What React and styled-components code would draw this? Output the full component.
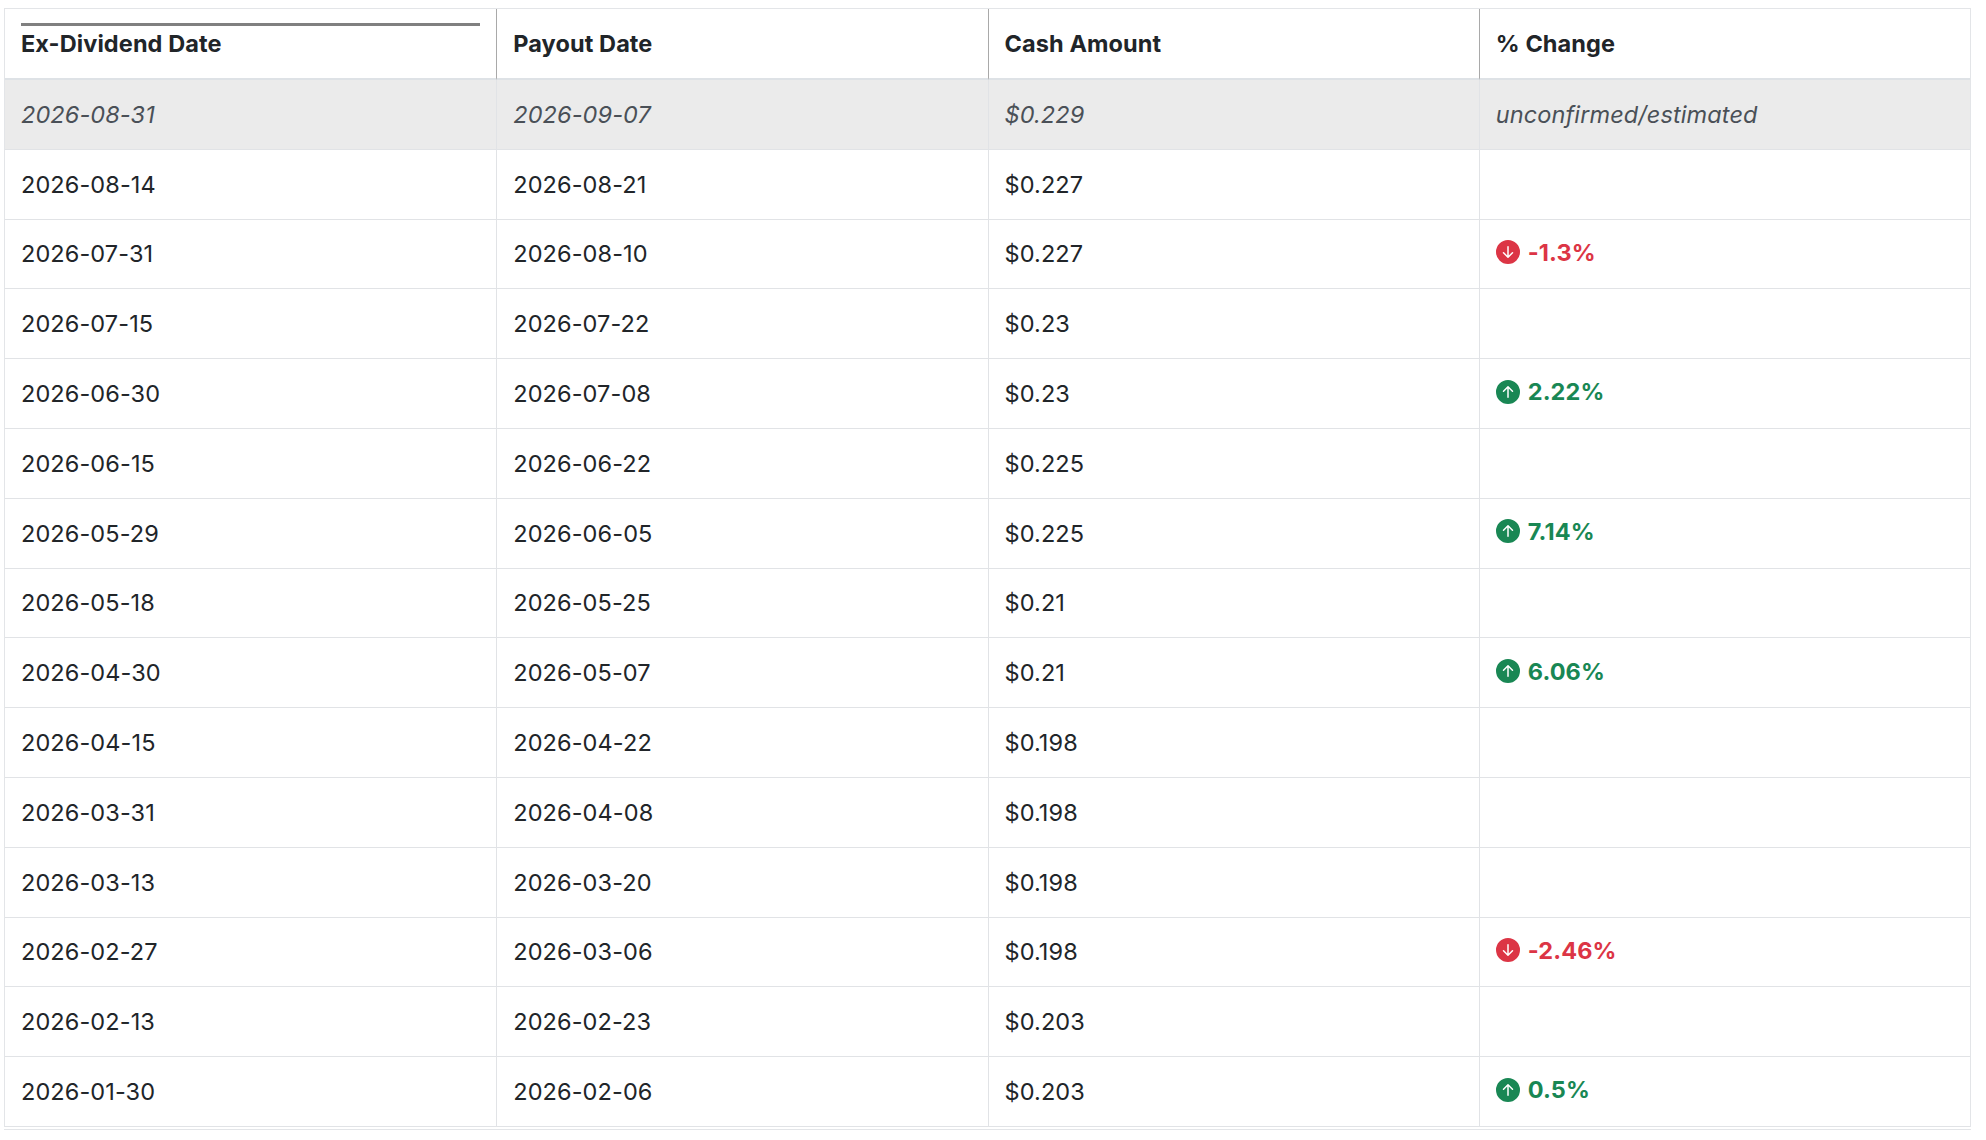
import React from "react";
import styled, { createGlobalStyle } from "styled-components";
import { BsArrowDownCircleFill, BsArrowUpCircleFill } from "react-icons/bs";

const GlobalStyle = createGlobalStyle`
  html, body {
    margin: 0;
    padding: 0;
    background: #ffffff;
  }
  body {
    font-family: Inter, "Noto Sans", "Liberation Sans", sans-serif;
    color: #212529;
  }
`;

const Page = styled.div`
  padding: 8px 15px 0 4px;
`;

const Frame = styled.div`
  border-bottom: 1px solid #e3e5e8;
  padding-bottom: 2px;
`;

const Table = styled.table`
  width: 100%;
  table-layout: fixed;
  border-collapse: separate;
  border-spacing: 0;
  border-top: 1px solid #e3e5e8;
  border-left: 1px solid #e3e5e8;
  border-right: 1px solid #e3e5e8;
  font-size: 23.5px;
  letter-spacing: 0.1px;
`;

const HeadCell = styled.th`
  position: relative;
  height: 69px;
  padding: 0 16px;
  text-align: left;
  vertical-align: middle;
  font-weight: 700;
  color: #212529;
  border-bottom: 2px solid #dee2e6;
  border-left: ${(p) => (p.$first ? "none" : "1px solid #a9a9a9")};

  ${(p) =>
    p.$sorted &&
    `
    &::before {
      content: "";
      position: absolute;
      left: 16px;
      right: 16px;
      top: 14px;
      height: 3px;
      background: #808080;
    }
  `}
`;

const Row = styled.tr`
  background: ${(p) => (p.$estimated ? "#ebebeb" : "#ffffff")};
  font-style: ${(p) => (p.$estimated ? "italic" : "normal")};
  color: ${(p) => (p.$estimated ? "#4a5057" : "#212529")};
`;

const Cell = styled.td`
  height: 68.8px;
  padding: 0 16px;
  vertical-align: middle;
  border-bottom: 1px solid #e1e3e6;
  border-left: ${(p) => (p.$first ? "none" : "1px solid #e1e3e6")};
  white-space: nowrap;
`;

const Change = styled.span`
  display: inline-flex;
  align-items: center;
  gap: 8px;
  font-weight: 700;
  color: ${(p) => (p.$up ? "#198754" : "#dc3545")};

  svg {
    width: 24px;
    height: 24px;
    flex: none;
  }
`;

const rows = [
  ["2026-08-31", "2026-09-07", "$0.229", null, true],
  ["2026-08-14", "2026-08-21", "$0.227", null],
  ["2026-07-31", "2026-08-10", "$0.227", "-1.3%"],
  ["2026-07-15", "2026-07-22", "$0.23", null],
  ["2026-06-30", "2026-07-08", "$0.23", "2.22%"],
  ["2026-06-15", "2026-06-22", "$0.225", null],
  ["2026-05-29", "2026-06-05", "$0.225", "7.14%"],
  ["2026-05-18", "2026-05-25", "$0.21", null],
  ["2026-04-30", "2026-05-07", "$0.21", "6.06%"],
  ["2026-04-15", "2026-04-22", "$0.198", null],
  ["2026-03-31", "2026-04-08", "$0.198", null],
  ["2026-03-13", "2026-03-20", "$0.198", null],
  ["2026-02-27", "2026-03-06", "$0.198", "-2.46%"],
  ["2026-02-13", "2026-02-23", "$0.203", null],
  ["2026-01-30", "2026-02-06", "$0.203", "0.5%"],
];

function ChangeValue({ value }) {
  const up = !value.startsWith("-");
  return (
    <Change $up={up}>
      {up ? <BsArrowUpCircleFill /> : <BsArrowDownCircleFill />}
      {value}
    </Change>
  );
}

export default function App() {
  return (
    <>
      <GlobalStyle />
      <Page>
        <Frame>
          <Table>
            <thead>
              <tr>
                <HeadCell $first $sorted>Ex-Dividend Date</HeadCell>
                <HeadCell>Payout Date</HeadCell>
                <HeadCell>Cash Amount</HeadCell>
                <HeadCell>% Change</HeadCell>
              </tr>
            </thead>
            <tbody>
              {rows.map(([ex, pay, cash, change, est]) => (
                <Row key={ex} $estimated={est}>
                  <Cell $first>{ex}</Cell>
                  <Cell>{pay}</Cell>
                  <Cell>{cash}</Cell>
                  <Cell>
                    {est ? "unconfirmed/estimated" : change ? <ChangeValue value={change} /> : null}
                  </Cell>
                </Row>
              ))}
            </tbody>
          </Table>
        </Frame>
      </Page>
    </>
  );
}
